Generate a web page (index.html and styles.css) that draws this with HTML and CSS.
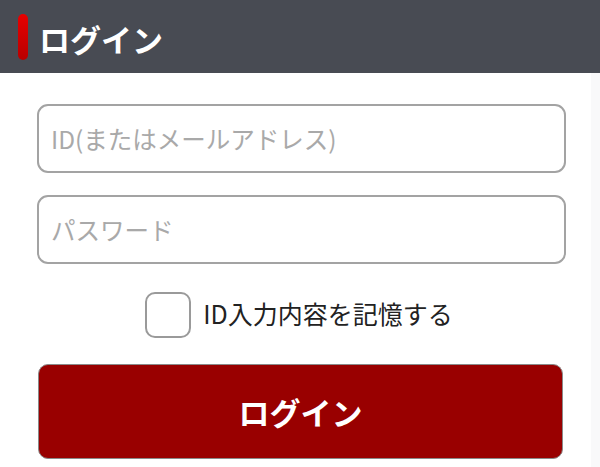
FILE: index.html
```html
<!DOCTYPE html>
<html>
<head>
    <title>ログイン</title>
    <link rel="stylesheet" href="styles.css">
</head>
<body>
    <div class="header">
        <span class="header-mark"></span>
        <h1>ログイン</h1>
    </div>

    <div class="page">
        <form class="login-form">
            <input class="field" type="text" placeholder="ID(またはメールアドレス)">
            <input class="field" type="password" placeholder="パスワード">

            <label class="remember">
                <input type="checkbox">
                <span>ID入力内容を記憶する</span>
            </label>

            <button type="button" class="login-button">ログイン</button>
        </form>
    </div>
</body>
</html>
```

FILE: styles.css
```css
body { margin: 0; font-family: "Noto Sans CJK JP", "Noto Sans", sans-serif; background: #fff; }

.header { height: 73px; background: #484b53; display: flex; align-items: center; padding-left: 18px; }
.header-mark { width: 10px; height: 46px; border-radius: 5px; background: linear-gradient(#e80000, #b80000); }
.header h1 { margin: 0 0 0 11px; color: #fff; font-size: 31px; font-weight: bold; line-height: 1; padding-top: 3px; }

.page { border-right: 9px solid #f9f9fa; min-height: 394px; box-sizing: border-box; }

.login-form { width: 529px; margin-left: 37px; padding-top: 31px; display: flex; flex-direction: column; }

.field { height: 69px; box-sizing: border-box; border: 2px solid #a3a3a3; border-radius: 11px; padding: 0 12px; font-family: inherit; font-size: 24.5px; color: #333; outline: none; }
.field + .field { margin-top: 22px; }
.field::placeholder { color: #a9a9a9; }

.remember { display: flex; align-items: center; justify-content: center; gap: 12px; margin-top: 28px; margin-left: -5px; font-size: 25px; color: #222; }
.remember input { appearance: none; width: 46px; height: 46px; margin: 0; border: 2px solid #9a9a9a; border-radius: 10px; background: #fff; }
.remember span { line-height: 1; padding-bottom: 4px; }

.login-button { width: 525px; height: 95px; margin: 26px 0 0 1px; background: #990000; border: 1px solid #8a8a8a; border-radius: 10px; color: #fff; font-family: inherit; font-size: 31px; font-weight: bold; }
```
